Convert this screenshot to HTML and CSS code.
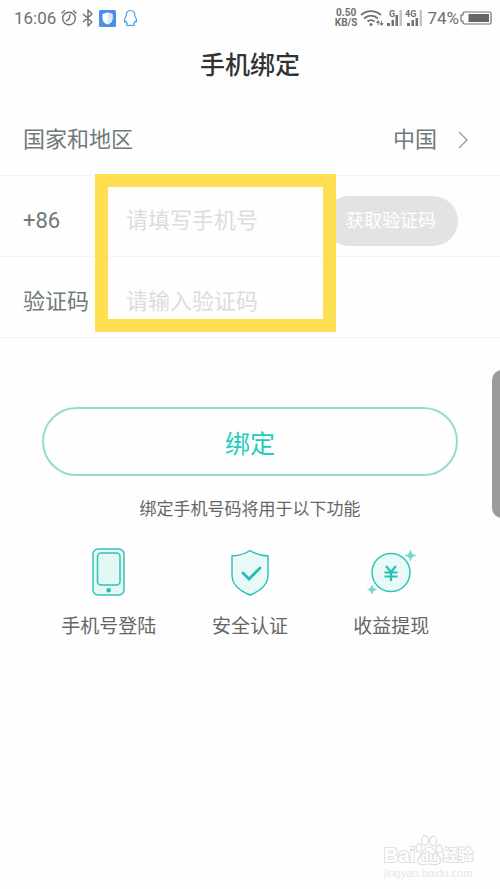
FILE: index.html
```html
<!DOCTYPE html>
<html lang="zh-CN">
<head>
<meta charset="utf-8">
<meta name="viewport" content="width=device-width, initial-scale=1">
<title>手机绑定</title>
<link rel="stylesheet" href="styles.css">
</head>
<body>
<div class="screen">
  <div class="status">
    <div class="status-group status-left">
      <span class="clock">16:06</span>
      <svg width="16" height="18" viewBox="0 0 16 18" fill="none" stroke="#707070" stroke-width="1.4" stroke-linecap="round"><circle cx="8" cy="9.5" r="6.3"/><path d="M1 4l2.500-2.300M15 4l-2.500-2.300M9 6L8 10l-2.600 1.800"/></svg>
      <svg width="12" height="18" viewBox="0 0 12 18" fill="none" stroke="#707070" stroke-width="1.4" stroke-linejoin="round"><path d="M1 5l9 8-4 4V1l4 4-9 8"/></svg>
      <svg width="17" height="17" viewBox="0 0 17 17"><rect width="17" height="17" rx="1.5" fill="#4a8ee6"/><path d="M8.500 2.500l5 1.600v4.400c0 3-2 4.900-5 6-3-1.100-5-3-5-6V4.100z" fill="#fff"/><path d="M8.500 2.500l5 1.600v4.400c0 3-2 4.900-5 6z" fill="#dbe9fb"/></svg>
      <svg width="15" height="18" viewBox="0 0 15 18" fill="none" stroke="#4d9fe2" stroke-width="1.200" stroke-linejoin="round"><path d="M3.200 7C3 3.500 4.500 1.500 7.500 1.500S12 3.500 11.800 7c1 1.500 2.200 3.500 1.800 5.500-.2 1-1 .4-1.500-.4-.2 1-.7 1.900-1.400 2.500.9.400 1 1.600.1 1.800-1.200.3-2.500.1-3.300-.5-.8.600-2.100.8-3.300.5-.9-.2-.8-1.400.1-1.800-.7-.6-1.200-1.500-1.400-2.500-.5.800-1.300 1.400-1.500.4C1 10.500 2.200 8.500 3.200 7z"/></svg>
    </div>
    <div class="status-group status-right">
      <span class="speed"><span>0.50</span><span>KB/S</span></span>
      <svg width="24" height="18" viewBox="0 0 24 18" fill="none" stroke="#707070" stroke-width="1.800"><path d="M1 6c6-5.300 14-5.300 20 0M4 9.500c4.300-3.700 9.700-3.700 14 0M7.500 12.500c2.200-1.800 4.800-1.800 7 0"/><circle cx="11" cy="15.500" r="1.500" fill="#707070" stroke="none"/><path d="M16.500 13.500h3l-1.500-2zM18 13v3.500M20 14.500h3l-1.500 2zM21.500 15v-3.500" fill="#707070" stroke-width=".8"/></svg>
      <svg class="signal" width="15" height="18" viewBox="0 0 15 18"><path d="M0 14h3v3H0zM4.500 11h2.500v6H4.500zM8.500 6h2.500v11H8.500z" fill="#707070"/><path d="M12.500 1H15v16h-2.500z" fill="#c4c4c4"/><text x="2" y="8" font-size="9">G</text></svg>
      <svg class="signal" width="17" height="18" viewBox="0 0 17 18"><path d="M2 14h3v3H2zM6.500 11H9v6H6.500zM10.500 9H13v8h-2.500z" fill="#707070"/><path d="M14.500 1H17v16h-2.500z" fill="#c4c4c4"/><text x="0" y="8" font-size="9">4G</text></svg>
      <span class="battery-text">74%</span>
      <svg width="32" height="14" viewBox="0 0 32 14"><path d="M4.500 1h25a1.500 1.500 0 0 1 1.500 1.500v9a1.500 1.500 0 0 1-1.500 1.500h-25A1.500 1.500 0 0 1 3 11.500V10H1V4h2V2.500A1.500 1.500 0 0 1 4.500 1z" fill="none" stroke="#707070" stroke-width="1.200"/><path d="M8.500 3H29v8H8.500z" fill="#666"/></svg>
    </div>
  </div>

  <h1 class="title">手机绑定</h1>

  <form class="form">
    <button class="row region" type="button">
      <span>国家和地区</span>
      <span class="region-value">中国
        <svg width="12" height="18" viewBox="0 0 12 18" fill="none" stroke="#999" stroke-width="1.300"><path d="M2 1l8 8-8 8"/></svg>
      </span>
    </button>
    <div class="row">
      <label class="label" for="phone">+86</label>
      <input class="field" id="phone" type="tel" placeholder="请填写手机号">
      <button class="send" type="button">获取验证码</button>
    </div>
    <div class="row">
      <label class="label" for="code">验证码</label>
      <input class="field" id="code" type="text" placeholder="请输入验证码">
    </div>
    <div class="highlight"></div>
  </form>

  <div class="action">
    <button class="bind" type="button">绑定</button>
    <p class="note">绑定手机号码将用于以下功能</p>
  </div>

  <ul class="features">
    <li class="feature">
      <svg width="48" height="50" viewBox="0 0 48 50" stroke="#38bfb3" fill="#e2f8f5"><rect x="8" y="2" width="31" height="46" rx="5" stroke-width="1.500"/><rect x="12.500" y="6" width="22.500" height="32" rx="3.500" stroke-width="1.500"/><circle cx="23.700" cy="43.300" r="2.200" fill="#20bdb0" stroke="none"/></svg>
      <span>手机号登陆</span>
    </li>
    <li class="feature">
      <svg width="48" height="50" viewBox="0 0 48 50" fill="none" stroke="#25bfb1"><path d="M24 3.500C29 7 35 8.500 42 9v19c0 10-7 15.500-18 20C13 43.500 6 38 6 28V9c7-.5 13-2 18-5.500z" fill="#e9f9f7" stroke-width="1.400"/><path d="M17 26l6 6 11-11" stroke-width="2.800" stroke-linecap="round"/></svg>
      <span>安全认证</span>
    </li>
    <li class="feature">
      <svg width="48" height="50" viewBox="0 0 48 50" fill="none"><circle cx="24" cy="25.500" r="19" fill="#e9f9f7" stroke="#30c4b6" stroke-width="1.500"/><path d="M19 19l5 6 5-6M24 25v9M17.500 25.500h13M17.500 29.500h13" stroke="#20c3b3" stroke-width="2.200"/><path d="M43.500 3c1.200 4 1.700 4.500 5.500 5.500-3.800 1-4.300 1.500-5.500 5.500-1.200-4-1.700-4.500-5.500-5.500 3.800-1 4.300-1.500 5.500-5.500zM5 38c1 3.200 1.400 3.600 4.500 4.500-3.100.9-3.500 1.300-4.500 4.500-1-3.200-1.400-3.600-4.500-4.500 3.100-.9 3.500-1.300 4.500-4.500z" fill="#70d8cc" stroke="#70d8cc" stroke-width=".6"/></svg>
      <span>收益提现</span>
    </li>
  </ul>

  <div class="side-handle"></div>

  <div class="watermark">
    <div class="brand">
      <span class="brand-latin">Bai</span>
      <span class="paw">
        <svg width="28" height="32" viewBox="0 0 28 32" fill="#fff" stroke="#ddd" stroke-width="1.200"><ellipse cx="4" cy="13" rx="3" ry="4.200"/><ellipse cx="10" cy="5.500" rx="3.300" ry="4.800"/><ellipse cx="18" cy="6" rx="3.300" ry="4.800"/><ellipse cx="24" cy="14" rx="3" ry="4.200"/><path d="M14 12c4 0 5.500 4 8 7s4.500 5 3 8.500c-2 4-7 1.500-11 1.500s-9 2.500-11-1.500C1.500 24 4 22 6.500 19s3.500-7 7.500-7z"/></svg>
        <span class="paw-text">du</span>
      </span>
      <span class="brand-cjk">经验</span>
    </div>
    <div class="domain">jingyan.baidu.com</div>
  </div>
</div>
</body>
</html>
```
FILE: styles.css
```css
* { box-sizing: border-box; }

body {
  margin: 0;
  background: #fefefe;
  color: #6f7a7a;
  font-family: Roboto, "Noto Sans CJK SC", sans-serif;
  font-size: 22px;
}

button, input { font: inherit; }

.screen {
  position: relative;
  min-height: 100vh;
  overflow: hidden;
}

.status {
  display: flex;
  justify-content: space-between;
  align-items: center;
  height: 36px;
  padding: 0 8px 0 14px;
  color: #707070;
  font-size: 17px;
}

.status-group { display: flex; align-items: center; }
.status-left { gap: 5px; }
.status-right { gap: 3px; }
.status-left svg:last-child { margin-left: 2px; }
.battery-text { margin-left: 2px; }
.battery-text + svg { margin-left: -2px; }

.speed {
  display: flex;
  flex-direction: column;
  align-items: center;
  font-size: 10px;
  font-weight: 700;
  line-height: 10px;
}

.signal text { fill: #707070; font-weight: 700; }

.title {
  margin: 10px 0 0;
  color: #333;
  font-size: 25px;
  font-weight: 500;
  line-height: 40px;
  text-align: center;
}

.form { position: relative; margin-top: 9px; }

.row {
  display: flex;
  align-items: center;
  width: 100%;
  height: 81px;
  padding: 10px 42px 0 23px;
  border: 0;
  border-bottom: 1px solid #f4f4f4;
  line-height: 32px;
}

.region {
  justify-content: space-between;
  padding-right: 31px;
  background: none;
  color: inherit;
  cursor: pointer;
}

.region-value { display: flex; align-items: center; gap: 20px; }

.label { flex: 0 0 103px; }

.field {
  flex: 1;
  min-width: 0;
  padding: 0;
  border: 0;
  outline: 0;
  background: none;
  color: #6f7a7a;
}

.field::placeholder { color: #dcdcdc; opacity: 1; }

.send {
  height: 50px;
  padding: 0 22px;
  border: 0;
  border-radius: 25px;
  background: #e3e3e3;
  color: #fff;
  font-size: 18px;
}

/* Frame laid over the two input rows */
.highlight {
  position: absolute;
  top: 79px;
  left: 95px;
  width: 241px;
  height: 158px;
  border: 13px solid #fedf51;
  pointer-events: none;
}

.action { padding: 69px 42px 0; text-align: center; }

.bind {
  width: 100%;
  height: 69px;
  border: 2px solid #92dcd4;
  border-radius: 35px;
  background: none;
  color: #1dccbd;
  font-size: 25px;
}

.note {
  margin: 20px 0 0;
  color: #666;
  font-size: 17px;
  line-height: 26px;
}

.features {
  display: grid;
  grid-template-columns: repeat(3, 1fr);
  margin: 25px 0 0;
  padding: 0 38px;
  list-style: none;
  color: #666;
  font-size: 19px;
  line-height: 28px;
}

.feature {
  display: flex;
  flex-direction: column;
  align-items: center;
  gap: 16px;
}

.feature svg { overflow: visible; }

.side-handle {
  position: absolute;
  top: 370px;
  right: -12px;
  width: 20px;
  height: 148px;
  border-radius: 10px;
  background: #9b9b9b;
}

.watermark {
  position: absolute;
  right: 27px;
  bottom: 9px;
  color: #fff;
  font-family: "Liberation Sans", "Noto Sans CJK SC", sans-serif;
}

.brand {
  display: flex;
  align-items: flex-end;
  height: 32px;
  font-weight: 700;
  line-height: 24px;
  -webkit-text-stroke: 2px #e0e0e0;
  paint-order: stroke fill;
}

.brand-latin { font-size: 20px; }
.brand-cjk { font-size: 15px; }
.paw { position: relative; height: 32px; }
.paw svg { display: block; paint-order: normal; }

.paw-text {
  position: absolute;
  right: 0;
  bottom: 0;
  left: 0;
  font-size: 13px;
  line-height: 20px;
  text-align: center;
}

.domain {
  color: #e6e6e6;
  font-size: 11px;
  line-height: 13px;
}
```
